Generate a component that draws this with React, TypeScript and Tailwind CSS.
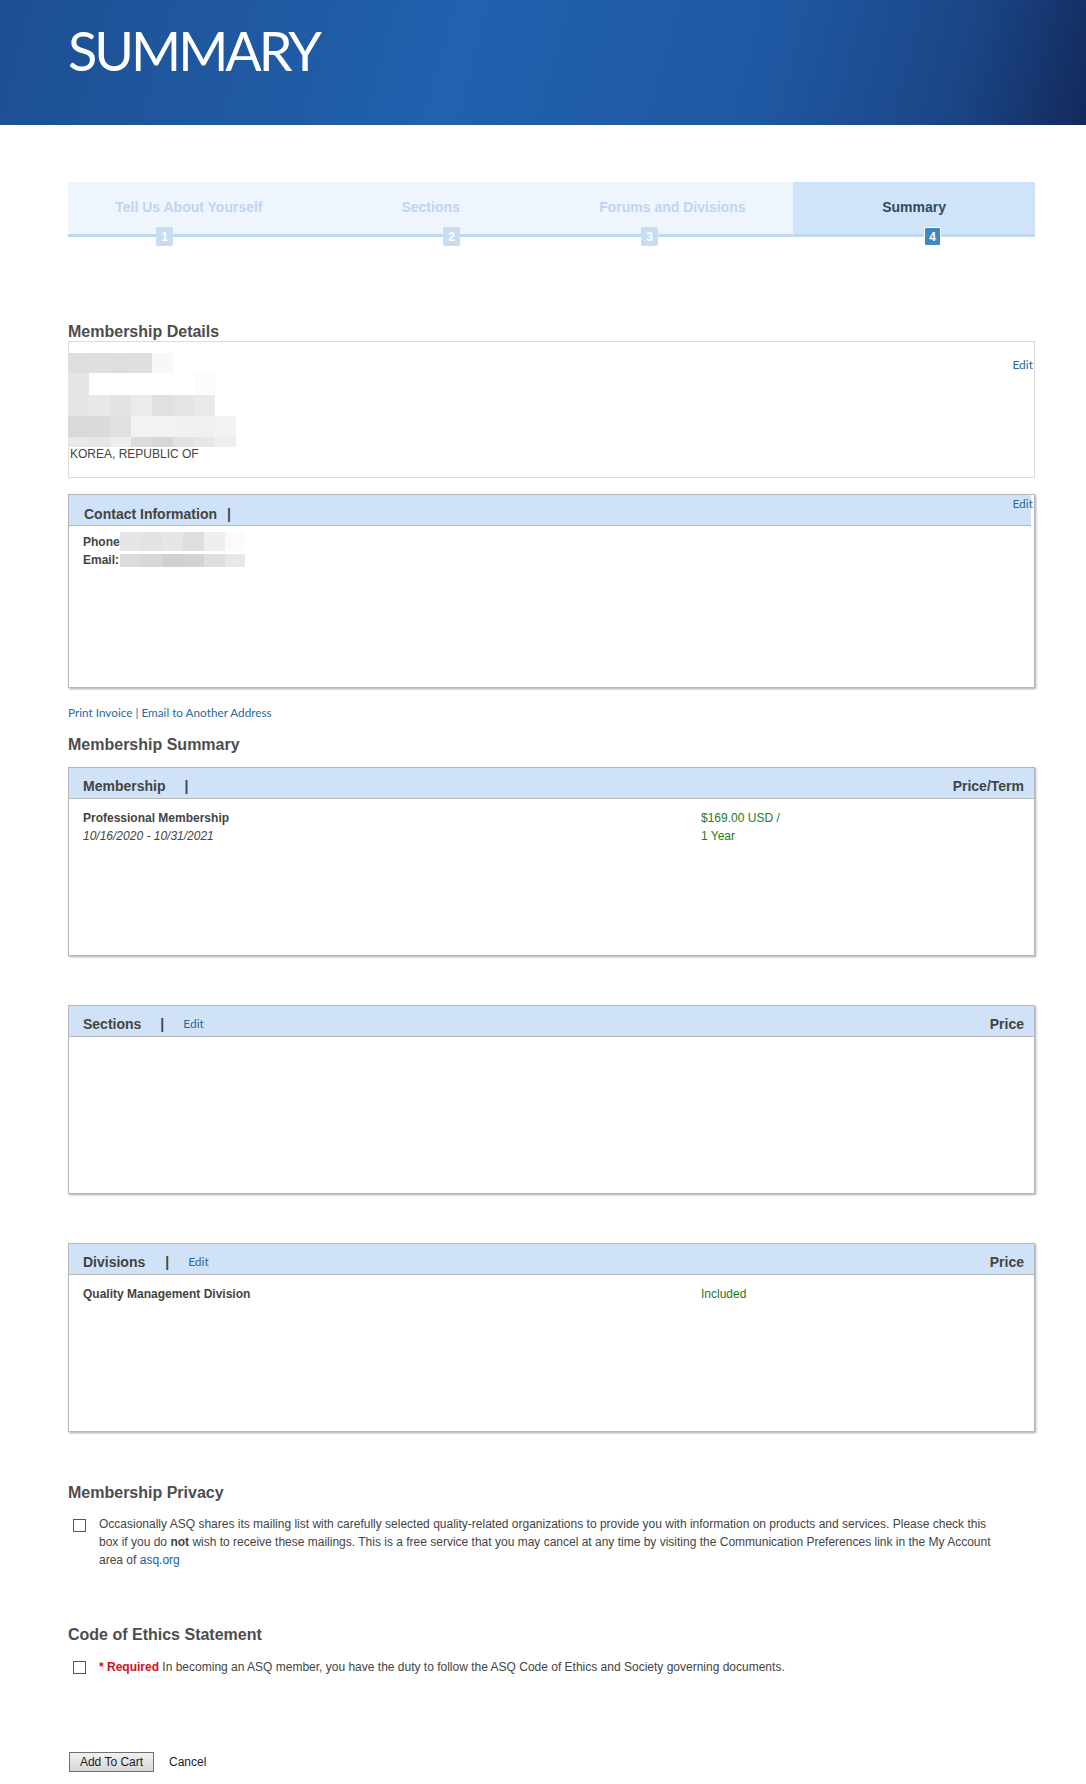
import React from "react";

const arial = "font-['Liberation_Sans',Arial,sans-serif]";
const futura = "font-['Lato','Open_Sans',sans-serif]";

type Step = { label: string; n: number; left: string; active?: boolean };

const steps: Step[] = [
  { label: "Tell Us About Yourself", n: 1, left: "left-[88px]" },
  { label: "Sections", n: 2, left: "left-[375px]" },
  { label: "Forums and Divisions", n: 3, left: "left-[573px]" },
  { label: "Summary", n: 4, left: "left-[856px]", active: true },
];

// redacted blocks in the address box
const addressRows: { h: string; cells: string[] }[] = [
  { h: "h-[20px]", cells: ["#dedede", "#dfdfdf", "#dedede", "#dfdfdf", "#f8f8f8"] },
  { h: "h-[22px]", cells: ["#e6e6e6", "#ffffff", "#ffffff", "#ffffff", "#ffffff", "#ffffff", "#fcfcfc"] },
  { h: "h-[21px]", cells: ["#e6e6e6", "#e8e8e8", "#e3e3e3", "#ebebeb", "#e0e0e0", "#e4e4e4", "#e9e9e9"] },
  { h: "h-[21px]", cells: ["#d9d9d9", "#dadada", "#e0e0e0", "#f2f2f2", "#f2f2f2", "#f1f1f1", "#f0f0f0", "#f3f3f3"] },
  { h: "h-[10px]", cells: ["#e8e8e8", "#e6e6e6", "#ededed", "#dcdcdc", "#d6d6d6", "#e2e2e2", "#e7e7e7", "#eeeeee"] },
];

const EditLink = ({ className = "" }: { className?: string }) => (
  <a className={`${futura} text-[12px] text-[#2a6a96] leading-none ${className}`}>Edit</a>
);

const Panel = ({
  header,
  right,
  children,
}: {
  header: React.ReactNode;
  right?: string;
  children?: React.ReactNode;
}) => (
  <div className="border border-[#b8b8b8] bg-white shadow-[1px_1px_2px_rgba(0,0,0,0.35)] h-[189px]">
    <div className="h-[31px] bg-[#cfe2f7] border-b border-[#b8b8b8] flex items-start justify-between pt-[10px] pl-[14px] pr-[10px]">
      <div className="flex items-center text-[14px] font-bold text-[#444] leading-[16px]">{header}</div>
      {right && <div className="text-[14px] font-bold text-[#444] leading-[16px]">{right}</div>}
    </div>
    {children}
  </div>
);

export default function App() {
  return (
    <div className={`${arial} bg-white w-[1086px] h-[1784px] text-[#444]`}>
      {/* Banner */}
      <div className="h-[125px] bg-[linear-gradient(105deg,#1d4f92_0%,#2161ae_42%,#1f58a2_70%,#1a4585_88%,#13295c_100%)] pl-[68px] pt-[24px]">
        <h1 className={`${futura} text-white text-[54px] leading-none tracking-[-3px] font-normal`}>SUMMARY</h1>
      </div>

      <div className="ml-[68px] w-[967px]">
        {/* Stepper */}
        <div className="relative mt-[57px] h-[55px] border-b-[3px] border-[#c0d8f0] grid grid-cols-4">
          {steps.map((s) => (
            <div
              key={s.n}
              className={`flex items-center justify-center text-[14px] font-bold ${
                s.active ? "bg-[#cfe4f8] text-[#2b4a6b]" : "bg-[#eef5fd] text-[#bed5ef]"
              }`}
            >
              <span className="-mt-[2px]">{s.label}</span>
            </div>
          ))}
          {steps.map((s) => (
            <div
              key={"n" + s.n}
              className={`absolute top-[45px] ${s.left} w-[17px] h-[19px] rounded-[2px] flex items-center justify-center text-[12px] font-bold text-white ${
                s.active ? "bg-[#3d88bd] border border-white" : "bg-[#c8dcf2]"
              }`}
            >
              {s.n}
            </div>
          ))}
        </div>

        {/* Membership Details */}
        <h2 className="mt-[86px] text-[16px] leading-[18px] font-bold text-[#4d4d4d]">Membership Details</h2>
        <div className="relative h-[137px] border border-[#dcdcdc] pt-[11px]">
          <div className="-ml-px">
            {addressRows.map((r, i) => (
              <div key={i} className={`flex ${r.h}`}>
                {r.cells.map((c, j) => (
                  <div key={j} className="w-[21px] h-full" style={{ backgroundColor: c }} />
                ))}
              </div>
            ))}
          </div>
          <p className="pl-[1px] text-[12px] leading-[14px] text-[#444]">KOREA, REPUBLIC OF</p>
          <EditLink className="absolute top-[17px] right-[1px]" />
        </div>

        {/* Contact Information */}
        <div className="relative mt-[16px] h-[194px] border border-[#b8b8b8] shadow-[1px_1px_2px_rgba(0,0,0,0.35)]">
          <div className="h-[31px] bg-[#cfe2f7] border-b border-[#b8b8b8] pt-[7px] pl-[15px] mr-[3px]">
            <span className="text-[14px] font-bold leading-[16px] text-[#444]">
              Contact Information<span className="ml-[10px]">|</span>
            </span>
          </div>
          <div className="pl-[14px] pt-[6px] text-[12px] font-bold leading-[18px] text-[#444]">
            <div className="flex items-center">
              Phone
              <span className="flex h-[19px]">
                <span className="w-[21px] bg-[#e6e6e6]" />
                <span className="w-[21px] bg-[#e3e3e3]" />
                <span className="w-[21px] bg-[#e6e6e6]" />
                <span className="w-[21px] bg-[#dedede]" />
                <span className="w-[21px] bg-[#efefef]" />
                <span className="w-[20px] bg-[#fbfbfb]" />
              </span>
            </div>
            <div className="flex items-center">
              Email:
              <span className="flex h-[13px] ml-[1px]">
                <span className="w-[21px] bg-[#dbdbdb]" />
                <span className="w-[21px] bg-[#d8d8d8]" />
                <span className="w-[21px] bg-[#d0d0d0]" />
                <span className="w-[21px] bg-[#d3d3d3]" />
                <span className="w-[21px] bg-[#dedede]" />
                <span className="w-[20px] bg-[#e8e8e8]" />
              </span>
            </div>
          </div>
          <EditLink className="absolute top-[3px] right-[1px]" />
        </div>

        <div className={`${futura} mt-[17px] text-[11.75px] leading-[16px] text-[#2a6a96]`}>
          <a>Print Invoice</a> | <a>Email to Another Address</a>
        </div>

        {/* Membership Summary */}
        <h2 className="mt-[15px] text-[16px] leading-[18px] font-bold text-[#4d4d4d]">Membership Summary</h2>
        <div className="mt-[13px]">
          <Panel
            header={
              <>
                Membership<span className="ml-[19px]">|</span>
              </>
            }
            right="Price/Term"
          >
            <div className="grid grid-cols-[618px_1fr] pl-[14px] pt-[10px] text-[12px] leading-[18px]">
              <div>
                <div className="font-bold text-[#444]">Professional Membership</div>
                <div className="italic text-[#444]">10/16/2020 - 10/31/2021</div>
              </div>
              <div className="text-[#267a1a]">
                <div>$169.00 USD /</div>
                <div>1 Year</div>
              </div>
            </div>
          </Panel>
        </div>

        <div className="mt-[49px]">
          <Panel
            header={
              <>
                Sections<span className="ml-[19px]">|</span>
                <EditLink className="ml-[19px] font-normal" />
              </>
            }
            right="Price"
          />
        </div>

        <div className="mt-[49px]">
          <Panel
            header={
              <>
                Divisions<span className="ml-[20px]">|</span>
                <EditLink className="ml-[19px] font-normal" />
              </>
            }
            right="Price"
          >
            <div className="grid grid-cols-[618px_1fr] pl-[14px] pt-[10px] text-[12px] leading-[18px]">
              <div className="font-bold text-[#444]">Quality Management Division</div>
              <div className="text-[#267a1a]">Included</div>
            </div>
          </Panel>
        </div>

        {/* Privacy */}
        <h2 className="mt-[52px] text-[16px] leading-[18px] font-bold text-[#4d4d4d]">Membership Privacy</h2>
        <div className="mt-[13px] flex items-start">
          <input
            type="checkbox"
            className="appearance-none mt-[4px] ml-[5px] w-[13px] h-[13px] border border-[#555] bg-white shrink-0"
          />
          <p className="ml-[13px] w-[900px] text-[12px] leading-[18px] text-[#444]">
            Occasionally ASQ shares its mailing list with carefully selected quality-related organizations to provide
            you with information on products and services. Please check this box if you do <b>not</b> wish to receive
            these mailings. This is a free service that you may cancel at any time by visiting the Communication
            Preferences link in the My Account area of <a className="text-[#1a5e9a]">asq.org</a>
          </p>
        </div>

        {/* Ethics */}
        <h2 className="mt-[57px] text-[16px] leading-[18px] font-bold text-[#4d4d4d]">Code of Ethics Statement</h2>
        <div className="mt-[14px] flex items-start">
          <input
            type="checkbox"
            className="appearance-none mt-[3px] ml-[5px] w-[13px] h-[13px] border border-[#555] bg-white shrink-0"
          />
          <p className="ml-[13px] text-[12px] leading-[18px] text-[#444]">
            <span className="text-[#d0101a] font-bold">* Required</span> In becoming an ASQ member, you have the duty to
            follow the ASQ Code of Ethics and Society governing documents.
          </p>
        </div>

        {/* Actions */}
        <div className="mt-[76px] flex items-center">
          <button className="ml-[1px] w-[85px] h-[20px] border border-[#707070] bg-[linear-gradient(#f2f2f2,#d6d6d6)] text-[12px] text-[#222] leading-none">
            Add To Cart
          </button>
          <a className="ml-[15px] text-[12px] text-[#222]">Cancel</a>
        </div>
      </div>
    </div>
  );
}
